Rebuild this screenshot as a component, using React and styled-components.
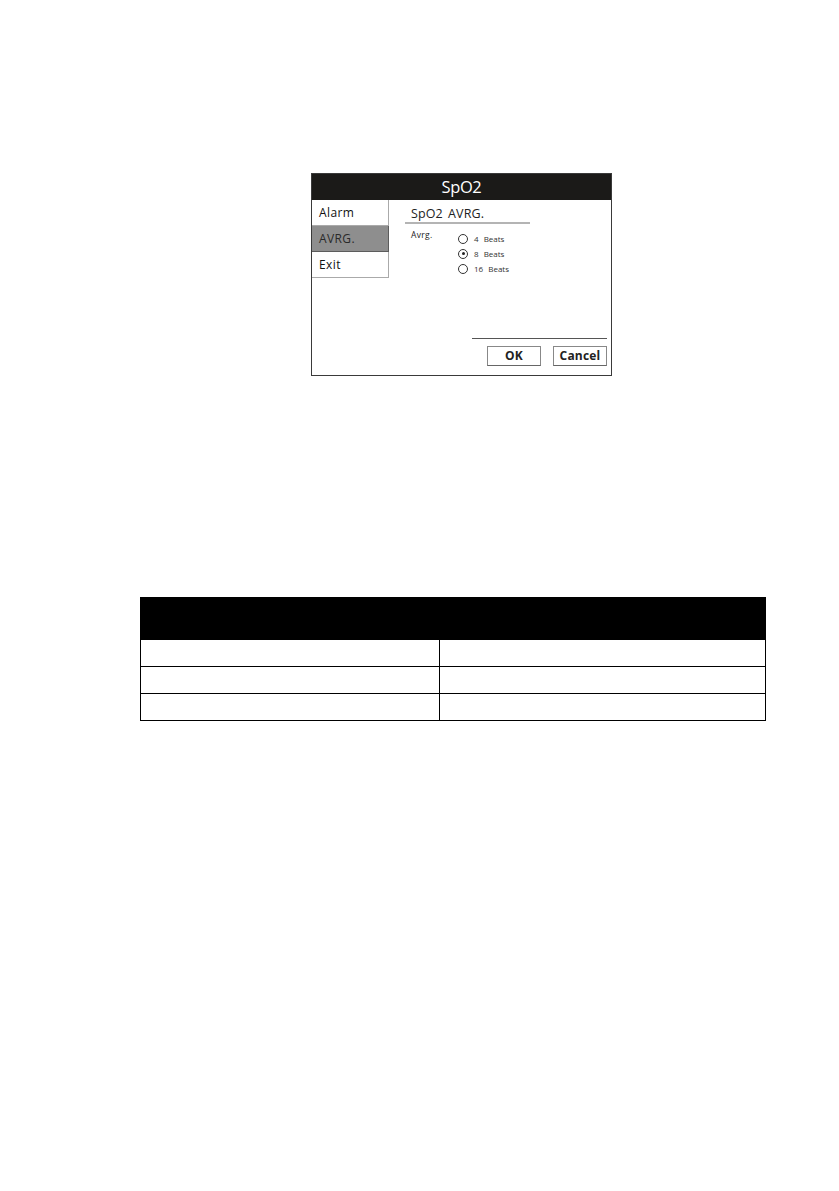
import React from 'react';
import styled, { createGlobalStyle } from 'styled-components';

const Global = createGlobalStyle`
  body {
    margin: 0;
    background: #fff;
    font-family: "Open Sans", "Liberation Sans", sans-serif;
  }
`;

const Page = styled.div`
  width: 839px;
  height: 1191px;
  padding-top: 173px;
  box-sizing: border-box;
`;

const Dialog = styled.div`
  margin-left: 311px;
  width: 301px;
  height: 203px;
  border: 1px solid #3a3a3a;
  box-sizing: border-box;
  display: flex;
  flex-direction: column;
`;

const TitleBar = styled.div`
  height: 26px;
  background: #1b1a18;
  color: #fff;
  font-size: 16.5px;
  line-height: 26px;
  text-align: center;
  letter-spacing: -0.4px;
`;

const Body = styled.div`
  flex: 1;
  display: flex;
`;

const Menu = styled.div`
  width: 77px;
  display: flex;
  flex-direction: column;
`;

const MenuItem = styled.div`
  height: 26px;
  box-sizing: border-box;
  padding-left: 7px;
  font-size: 12px;
  line-height: 26px;
  color: ${p => (p.$active ? '#2a2a2a' : '#111')};
  background: ${p => (p.$active ? '#8e8e8e' : '#fff')};
  border: 1px solid ${p => (p.$active ? '#5c5c5c' : '#aaa')};
  border-top: none;
  border-left: none;
  letter-spacing: 0.4px;
`;

const Panel = styled.div`
  flex: 1;
  display: flex;
  flex-direction: column;
  padding: 6px 4px 9px 22px;
`;

const Heading = styled.div`
  width: 119px;
  margin-left: -6px;
  padding-left: 6px;
  font-size: 12.5px;
  line-height: 16px;
  color: #222;
  border-bottom: 2px solid #b4b4b4;
  letter-spacing: 0.1px;
  word-spacing: 2px;
`;

const Options = styled.div`
  display: flex;
  margin-top: 5px;
`;

const Label = styled.div`
  width: 47px;
  font-size: 8.5px;
  color: #222;
  letter-spacing: 0.3px;
`;

const RadioList = styled.div`
  display: flex;
  flex-direction: column;
  gap: 4px;
  padding-top: 4px;
`;

const Radio = styled.div`
  display: flex;
  align-items: center;
  height: 11px;
  font-size: 8px;
  color: #333;
  word-spacing: 3px;
`;

const Circle = styled.span`
  width: 8px;
  height: 8px;
  border: 1px solid #333;
  border-radius: 50%;
  margin-right: 6px;
  display: flex;
  align-items: center;
  justify-content: center;
  &::after {
    content: '';
    width: 3px;
    height: 3px;
    border-radius: 50%;
    background: ${p => (p.$on ? '#222' : 'transparent')};
  }
`;

const Footer = styled.div`
  margin-top: auto;
  margin-left: 61px;
  border-top: 1px solid #555;
  padding-top: 7px;
  display: flex;
  justify-content: flex-end;
  gap: 12px;
`;

const Button = styled.div`
  width: 54px;
  height: 20px;
  box-sizing: border-box;
  border: 1px solid #888;
  border-bottom-color: #666;
  font-size: 12px;
  font-weight: 700;
  line-height: 18px;
  text-align: center;
  color: #222;
  letter-spacing: 0.2px;
`;

const Table = styled.table`
  margin-top: 221px;
  margin-left: 140px;
  width: 626px;
  border-collapse: collapse;
`;

const Head = styled.th`
  height: 41px;
  background: #000;
  border: 1px solid #000;
  padding: 0;
`;

const Cell = styled.td`
  height: 26px;
  border: 1px solid #000;
  padding: 0;
  width: ${p => p.$w || 'auto'};
`;

const options = [
  { text: '4 Beats', on: false },
  { text: '8 Beats', on: true },
  { text: '16 Beats', on: false },
];

export default function App() {
  return (
    <Page>
      <Global />
      <Dialog>
        <TitleBar>SpO2</TitleBar>
        <Body>
          <Menu>
            <MenuItem>Alarm</MenuItem>
            <MenuItem $active>AVRG.</MenuItem>
            <MenuItem>Exit</MenuItem>
          </Menu>
          <Panel>
            <Heading>SpO2 AVRG.</Heading>
            <Options>
              <Label>Avrg.</Label>
              <RadioList>
                {options.map(o => (
                  <Radio key={o.text}>
                    <Circle $on={o.on} />
                    {o.text}
                  </Radio>
                ))}
              </RadioList>
            </Options>
            <Footer>
              <Button>OK</Button>
              <Button>Cancel</Button>
            </Footer>
          </Panel>
        </Body>
      </Dialog>
      <Table>
        <thead>
          <tr>
            <Head />
            <Head />
          </tr>
        </thead>
        <tbody>
          {[0, 1, 2].map(i => (
            <tr key={i}>
              <Cell $w="298px" />
              <Cell />
            </tr>
          ))}
        </tbody>
      </Table>
    </Page>
  );
}
